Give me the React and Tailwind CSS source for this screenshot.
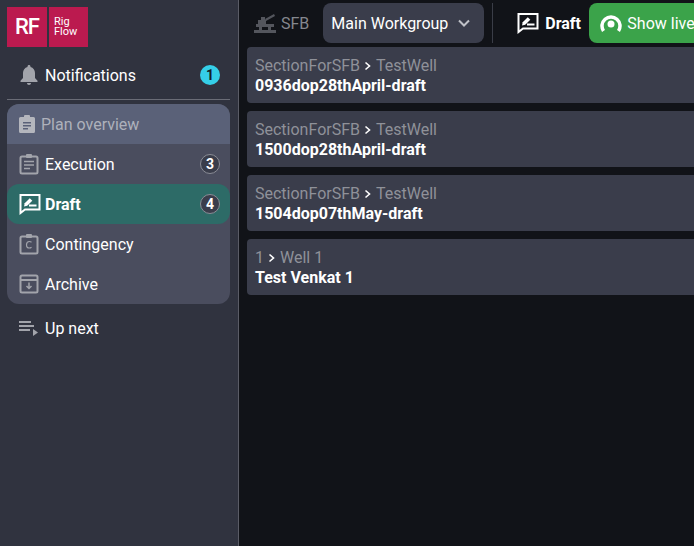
import React from 'react';

const font = { fontFamily: 'Roboto, sans-serif' };

function ClipboardIcon({ letter }) {
  return (
    <svg width="20" height="22" viewBox="0 0 20 22" fill="none" stroke="#a2a4ab" strokeWidth="2" className="shrink-0">
      <rect x="1.5" y="3.5" width="17" height="17" rx="1.5" />
      <rect x="7" y="1" width="6" height="4" fill="#a2a4ab" stroke="none" rx="1" />
      {letter ? (
        <path d="M12.5 9.2c-.6-.5-1.3-.7-2.2-.7-1.7 0-2.8 1.2-2.8 3.2s1.100 3.300 2.800 3.300c.9 0 1.600-.3 2.200-.8" strokeWidth="1.2" />
      ) : (
        <path d="M5 8.500h10M5 12h10M5 15.500h6" strokeWidth="1.6" />
      )}
    </svg>
  );
}

function DraftIcon({ color = 'white' }) {
  return (
    <svg width="22" height="22" viewBox="0 0 22 22" fill="none" className="shrink-0">
      <path d="M1.500 2h19v14.500H6L1.500 20z" stroke={color} strokeWidth="2" strokeLinejoin="miter" />
      <path d="M5 13.500l.7-3.200L10.800 5.200l2.500 2.500-5.100 5.100z" fill={color} />
      <path d="M10 12.500h7.500" stroke={color} strokeWidth="2" />
    </svg>
  );
}

function Badge({ n }) {
  return (
    <span className="ml-auto flex h-5 w-5 items-center justify-center rounded-full border border-[#8a8c95] bg-[#3a3d4b] text-sm font-bold text-white">
      {n}
    </span>
  );
}

function Row({ icon, label, badge, className = '', labelClass = 'text-white' }) {
  return (
    <div className={`flex h-10 items-center pl-3 pr-[10px] text-base ${className}`}>
      <span className="flex w-[26px] shrink-0 items-center">{icon}</span>
      <span className={`pt-[2px] ${labelClass}`}>{label}</span>
      {badge && <Badge n={badge} />}
    </div>
  );
}

function DraftCard({ path, sub, name }) {
  return (
    <div className="h-14 w-[480px] rounded bg-[#3a3d4b] px-2 pt-[9px]">
      <div className="flex h-5 items-center text-base leading-5 text-[#8f9199]">
        <span>{path}</span>
        <svg width="8" height="10" viewBox="0 0 8 10" fill="none" stroke="white" strokeWidth="1.600" className="mx-1">
          <path d="M1.500 1.500L5.500 5l-4 3.500" />
        </svg>
        <span>{sub}</span>
      </div>
      <div className="h-5 text-base leading-5 font-bold text-white">{name}</div>
    </div>
  );
}

export default function App() {
  return (
    <div className="flex h-[546px] w-[694px] overflow-hidden bg-[#111318]" style={font}>
      <aside className="flex w-[239px] shrink-0 flex-col border-r border-[#5a5c66] bg-[#30333f] pt-[7px]">
        <div className="flex gap-[2px] pl-[7px]">
          <div className="flex h-10 w-10 items-center justify-center bg-[#bb1a4f] text-[22px] leading-none font-medium tracking-[-1px] text-white">RF</div>
          <div className="flex h-10 w-[39px] flex-col justify-center bg-[#bb1a4f] pl-[5px] text-[11px] leading-[10px] text-white">
            <span>Rig</span>
            <span>Flow</span>
          </div>
        </div>
        <div className="ml-[7px] mr-2 mt-2 flex h-10 items-center pl-[13px] pr-[10px] text-base text-white">
          <svg width="18" height="20" viewBox="0 0 18 20" fill="#a2a4ab" className="mr-[7px] shrink-0">
            <path d="M9 0c.9 0 1.500.6 1.500 1.500v.6C13.300 2.800 15 5.200 15 8v5l2.500 2.800V17H.5v-1.200L3 13V8c0-2.800 1.700-5.200 4.500-5.900v-.6C7.500.6 8.100 0 9 0z" />
            <path d="M7 18h4c0 1.100-.9 2-2 2s-2-.9-2-2z" />
          </svg>
          <span className="pt-[2px]">Notifications</span>
          <span className="ml-auto flex h-5 w-5 items-center justify-center rounded-full bg-[#35cfe8] text-sm font-bold text-[#14202a]">1</span>
        </div>
        <div className="ml-[7px] mr-2 mt-1 h-px bg-[#6a6c76]" />
        <div className="ml-[7px] mr-2 mt-1 overflow-hidden rounded-xl bg-[#4a4d5e]">
          <div className="flex h-10 items-center bg-[#5a6178] pl-3 text-base text-[#aeb1bb]">
            <svg width="16" height="18" viewBox="0 0 16 18" className="mr-[6px] shrink-0">
              <path fill="#b4b6bd" fillRule="evenodd" d="M1.500 2H5V1a1 1 0 0 1 1-1h4a1 1 0 0 1 1 1v1h3.500A1.500 1.500 0 0 1 16 3.500v13a1.500 1.500 0 0 1-1.500 1.500h-13A1.500 1.500 0 0 1 0 16.500v-13A1.500 1.500 0 0 1 1.500 2zM4 7v1.500h8V7zm0 3v1.500h8V10zm0 3v1.500h5V13z" />
            </svg>
            <span className="pt-[2px]">Plan overview</span>
          </div>
          <Row icon={<ClipboardIcon />} label="Execution" badge="3" />
          <Row icon={<DraftIcon />} label="Draft" badge="4" className="rounded-xl bg-[#2d6b67]" labelClass="font-bold text-white" />
          <Row icon={<ClipboardIcon letter />} label="Contingency" />
          <Row
            icon={
              <svg width="20" height="20" viewBox="0 0 20 20" fill="none" stroke="#a2a4ab" strokeWidth="2" className="shrink-0">
                <rect x="1.500" y="1.500" width="17" height="17" rx="1.500" />
                <path d="M1.500 6h17" />
                <path d="M10 8.500v6M7.500 12l2.500 2.500 2.500-2.500" strokeWidth="1.500" />
              </svg>
            }
            label="Archive"
          />
        </div>
        <div className="ml-[7px] mt-1 flex h-10 items-center pl-3 text-base text-white">
          <svg width="20" height="16" viewBox="0 0 20 16" fill="#a2a4ab" className="mr-[6px] shrink-0">
            <path d="M0 1h12v2H0zM0 5h15v2H0zM0 9h11v2H0z" />
            <path d="M14 9l5 3.500-5 3.500z" />
          </svg>
          <span className="pt-[2px]">Up next</span>
        </div>
      </aside>

      <main className="flex min-w-0 flex-1 flex-col pl-2 pt-[3px]">
        <header className="flex h-10 shrink-0 items-center whitespace-nowrap text-base">
          <svg width="22" height="20" viewBox="0 0 22 20" fill="#54565d" className="ml-[7px] shrink-0">
            <path d="M2 11h18v3H2zM0 17h22v3H0zM5 14h3v3H5zM14 14h3v3h-3zM4 7h8v4H4zM7 4h4v3H7zM11 6l9-5 1 2-9 5z" />
          </svg>
          <span className="ml-[5px] w-[29px] pt-[2px] text-[#85878e]">SFB</span>
          <div className="ml-[14px] flex h-10 w-[161px] shrink-0 items-center justify-between rounded-lg bg-[#3a3d4b] pl-2 pr-[14px] text-white">
            <span className="pt-[2px]">Main Workgroup</span>
            <svg width="12" height="8" viewBox="0 0 12 8" fill="none" stroke="#c0c2c8" strokeWidth="2">
              <path d="M1 1.500l5 5 5-5" />
            </svg>
          </div>
          <div className="ml-2 h-10 w-px shrink-0 bg-[#3a3d47]" />
          <span className="ml-6 shrink-0"><DraftIcon /></span>
          <span className="ml-[6px] w-9 shrink-0 pt-[2px] font-bold text-white">Draft</span>
          <div className="ml-2 flex h-10 w-[180px] shrink-0 items-center rounded-lg bg-[#3ba34a] pl-[11px] text-white">
            <svg width="22" height="20" viewBox="0 0 22 20" fill="none" className="mr-[5px] shrink-0">
              <path d="M3.500 18A9 9 0 1 1 18.500 18" stroke="white" strokeWidth="3.500" />
              <circle cx="11" cy="11" r="3.500" fill="white" />
            </svg>
            <span className="pt-[2px]">Show live</span>
          </div>
        </header>
        <section className="mt-1 flex flex-col gap-2">
          <DraftCard path="SectionForSFB" sub="TestWell" name="0936dop28thApril-draft" />
          <DraftCard path="SectionForSFB" sub="TestWell" name="1500dop28thApril-draft" />
          <DraftCard path="SectionForSFB" sub="TestWell" name="1504dop07thMay-draft" />
          <DraftCard path="1" sub="Well 1" name="Test Venkat 1" />
        </section>
      </main>
    </div>
  );
}
